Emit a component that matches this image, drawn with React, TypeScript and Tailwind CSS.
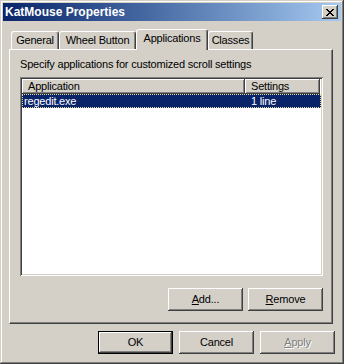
import React from 'react'

// Win2000 classic bevels
const raised =
  'shadow-[inset_-1px_-1px_#404040,inset_1px_1px_#ffffff,inset_-2px_-2px_#808080,inset_2px_2px_#d4d0c8]'

const closeGlyph = ['xx....xx', '.xx..xx.', '..xxxx..', '...xx...', '..xxxx..', '.xx..xx.', 'xx....xx']

const CloseIcon = () => (
  <svg width="8" height="7" viewBox="0 0 8 7" shapeRendering="crispEdges">
    {closeGlyph.map((row, y) =>
      row.split('').map((c, x) => (c === 'x' ? <rect key={`${x}-${y}`} x={x} y={y} width="1" height="1" fill="#000" /> : null))
    )}
  </svg>
)

const Tab = ({ label, active }: { label: string; active?: boolean }) => (
  <div
    className={
      active
        ? 'relative z-10 -mb-px h-[21px] w-[72px] flex items-center justify-center bg-[#d4d0c8] border-l border-t border-r border-l-white border-t-white border-r-[#404040] rounded-t-[3px] shadow-[inset_-1px_0_#808080] pb-[3px]'
        : 'h-[18px] flex items-center justify-center bg-[#d4d0c8] border-l border-t border-r border-l-white border-t-white border-r-[#404040] rounded-t-[3px] shadow-[inset_-1px_0_#808080]'
    }
  >
    {label}
  </div>
)

const Button = ({ children, isDefault }: { children: React.ReactNode; isDefault?: boolean }) => (
  <div
    className={
      isDefault
        ? 'w-[75px] h-[23px] border border-black flex items-center justify-center ' + raised
        : 'w-[75px] h-[23px] flex items-center justify-center ' + raised
    }
  >
    {children}
  </div>
)

export default function App() {
  return (
    <div className="w-[344px] h-[364px] bg-[#d4d0c8] p-[3px] flex flex-col text-[11px] leading-[13px] text-black tracking-[-0.2px] font-['Liberation_Sans',Arial,sans-serif] shadow-[inset_-1px_-1px_#404040,inset_1px_1px_#d4d0c8,inset_-2px_-2px_#808080,inset_2px_2px_#ffffff]">
      {/* Title bar */}
      <div className="h-[18px] flex items-center justify-between bg-linear-to-r from-[#0a246a] to-[#a6caf0] pl-[2px] pr-[3px]">
        <span className="text-white font-bold text-[12px] tracking-normal">KatMouse Properties</span>
        <div className={'w-[16px] h-[14px] bg-[#d4d0c8] flex items-center justify-center ' + raised}>
          <CloseIcon />
        </div>
      </div>

      {/* Tabs */}
      <div className="ml-[6px] mt-[8px] w-[324px]">
        <div className="flex items-end h-[20px] pl-[2px]">
          <div className="w-[48px]"><Tab label="General" /></div>
          <div className="w-[77px]"><Tab label="Wheel Button" /></div>
          <Tab label="Applications" active />
          <div className="w-[45px]"><Tab label="Classes" /></div>
        </div>

        {/* Panel */}
        <div className="h-[275px] border border-t-white border-l-white border-r-[#404040] border-b-[#404040] shadow-[inset_-1px_-1px_#808080] pl-[10px] pt-[8px] flex flex-col">
          <div className="w-[303px]">
            <div>Specify applications for customized scroll settings</div>

            {/* List view */}
            <div className="mt-[6px] h-[199px] bg-white shadow-[inset_1px_1px_#808080,inset_-1px_-1px_#ffffff,inset_2px_2px_#404040,inset_-2px_-2px_#d4d0c8] p-[2px]">
              <div className="flex h-[15px]">
                <div className={'w-[223px] bg-[#d4d0c8] flex items-center pl-[6px] ' + raised}>Application</div>
                <div className={'w-[75px] bg-[#d4d0c8] flex items-center pl-[6px] ' + raised}>Settings</div>
              </div>
              <div className="flex h-[14px] bg-[#0a246a] text-white border border-dotted border-[#e8dc9c]">
                <div className="w-[222px] pl-[1px]">regedit.exe</div>
                <div className="pl-[6px]">1 line</div>
              </div>
            </div>

            <div className="mt-[12px] flex justify-end gap-[5px]">
              <Button>
                <span><span className="underline">A</span>dd...</span>
              </Button>
              <Button>
                <span><span className="underline">R</span>emove</span>
              </Button>
            </div>
          </div>
        </div>
      </div>

      {/* Dialog buttons */}
      <div className="mt-[7px] flex justify-end gap-[6px] pr-[6px]">
        <Button isDefault>OK</Button>
        <Button>Cancel</Button>
        <Button>
          <span className="text-[#808080] [text-shadow:1px_1px_0_#ffffff]">
            <span className="underline">A</span>pply
          </span>
        </Button>
      </div>
    </div>
  )
}
